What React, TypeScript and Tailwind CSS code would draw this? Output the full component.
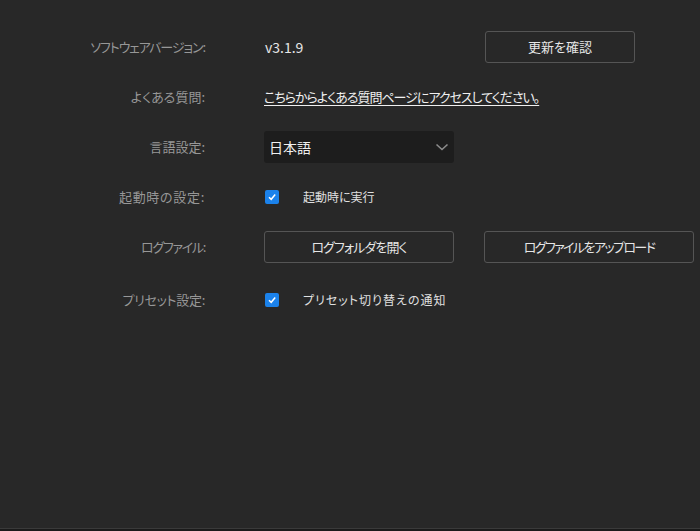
import { useState } from "react";

const font = "font-['Noto_Sans_CJK_JP','Liberation_Sans',sans-serif] [font-feature-settings:'palt']";

function Label({ text, track = "" }: { text: string; track?: string }) {
  return (
    <div className={`w-[205px] shrink-0 text-right text-[13px] text-[#979797] ${track}`}>
      {text}
    </div>
  );
}

function Check({ checked, onClick }: { checked: boolean; onClick: () => void }) {
  return (
    <button
      onClick={onClick}
      className={`w-[14px] h-[14px] rounded-[2px] flex items-center justify-center ml-[1px] ${checked ? "bg-[#1b82eb]" : "border border-[#777]"}`}
    >
      {checked && (
        <svg width="10" height="10" viewBox="0 0 10 10">
          <path d="M2 5.2 L4.2 7.3 L8.2 2.6" fill="none" stroke="white" strokeWidth="1.5" />
        </svg>
      )}
    </button>
  );
}

export default function App() {
  const [startup, setStartup] = useState(true);
  const [notify, setNotify] = useState(true);

  return (
    <div className={`w-[700px] h-[531px] bg-[#282828] flex flex-col ${font}`}>
      <div className="flex-1 pt-[22px]">

        {/* バージョン */}
        <div className="h-[50px] flex items-center">
          <Label text="ソフトウェアバージョン:" track="tracking-[-1.1px]" />
          <div className="ml-[60px] w-[189px] text-[14px] text-[#e6e6e6]">v3.1.9</div>
          <button className="ml-[31px] w-[150px] h-[32px] border border-[#555] rounded-[3px] text-[13px] text-[#e6e6e6]">
            更新を確認
          </button>
        </div>

        {/* FAQ */}
        <div className="h-[50px] flex items-center">
          <Label text="よくある質問:" />
          <a className="ml-[59px] text-[13px] text-[#f0f0f0] tracking-[-1px] underline underline-offset-[3px] cursor-pointer">
            こちらからよくある質問ページにアクセスしてください。
          </a>
        </div>

        {/* 言語 */}
        <div className="h-[50px] flex items-center">
          <Label text="言語設定:" />
          <div className="ml-[59px] w-[190px] h-[32px] bg-[#1d1d1d] rounded-[3px] flex items-center justify-between pl-[5px] pr-[5px]">
            <span className="text-[14px] text-[#f0f0f0]">日本語</span>
            <svg width="14" height="10" viewBox="0 0 14 10">
              <path d="M1.5 2.5 L7 7.5 L12.5 2.5" fill="none" stroke="#8c8c8c" strokeWidth="1.6" />
            </svg>
          </div>
        </div>

        {/* 起動時 */}
        <div className="h-[50px] flex items-center">
          <Label text="起動時の設定:" track="tracking-[0.7px]" />
          <div className="ml-[59px] flex items-center">
            <Check checked={startup} onClick={() => setStartup(!startup)} />
            <span className="ml-[24px] text-[12px] text-[#e0e0e0]">起動時に実行</span>
          </div>
        </div>

        {/* ログ */}
        <div className="h-[50px] flex items-center">
          <Label text="ログファイル:" track="tracking-[-1.3px]" />
          <button className="ml-[59px] w-[190px] h-[32px] border border-[#555] rounded-[3px] text-[13px] text-[#e6e6e6] tracking-[-0.9px]">
            ログフォルダを開く
          </button>
          <button className="ml-[30px] w-[210px] h-[32px] border border-[#555] rounded-[3px] text-[13px] text-[#e6e6e6] tracking-[-1.6px]">
            ログファイルをアップロード
          </button>
        </div>

        {/* プリセット */}
        <div className="h-[56px] flex items-center">
          <Label text="プリセット設定:" track="tracking-[-0.3px]" />
          <div className="ml-[59px] flex items-center">
            <Check checked={notify} onClick={() => setNotify(!notify)} />
            <span className="ml-[24px] text-[12px] text-[#e0e0e0] tracking-[1px]">プリセット切り替えの通知</span>
          </div>
        </div>
      </div>

      <div className="h-[3px] border-t border-[#3a3a3a] bg-[#1b1b1b]" />
    </div>
  );
}
